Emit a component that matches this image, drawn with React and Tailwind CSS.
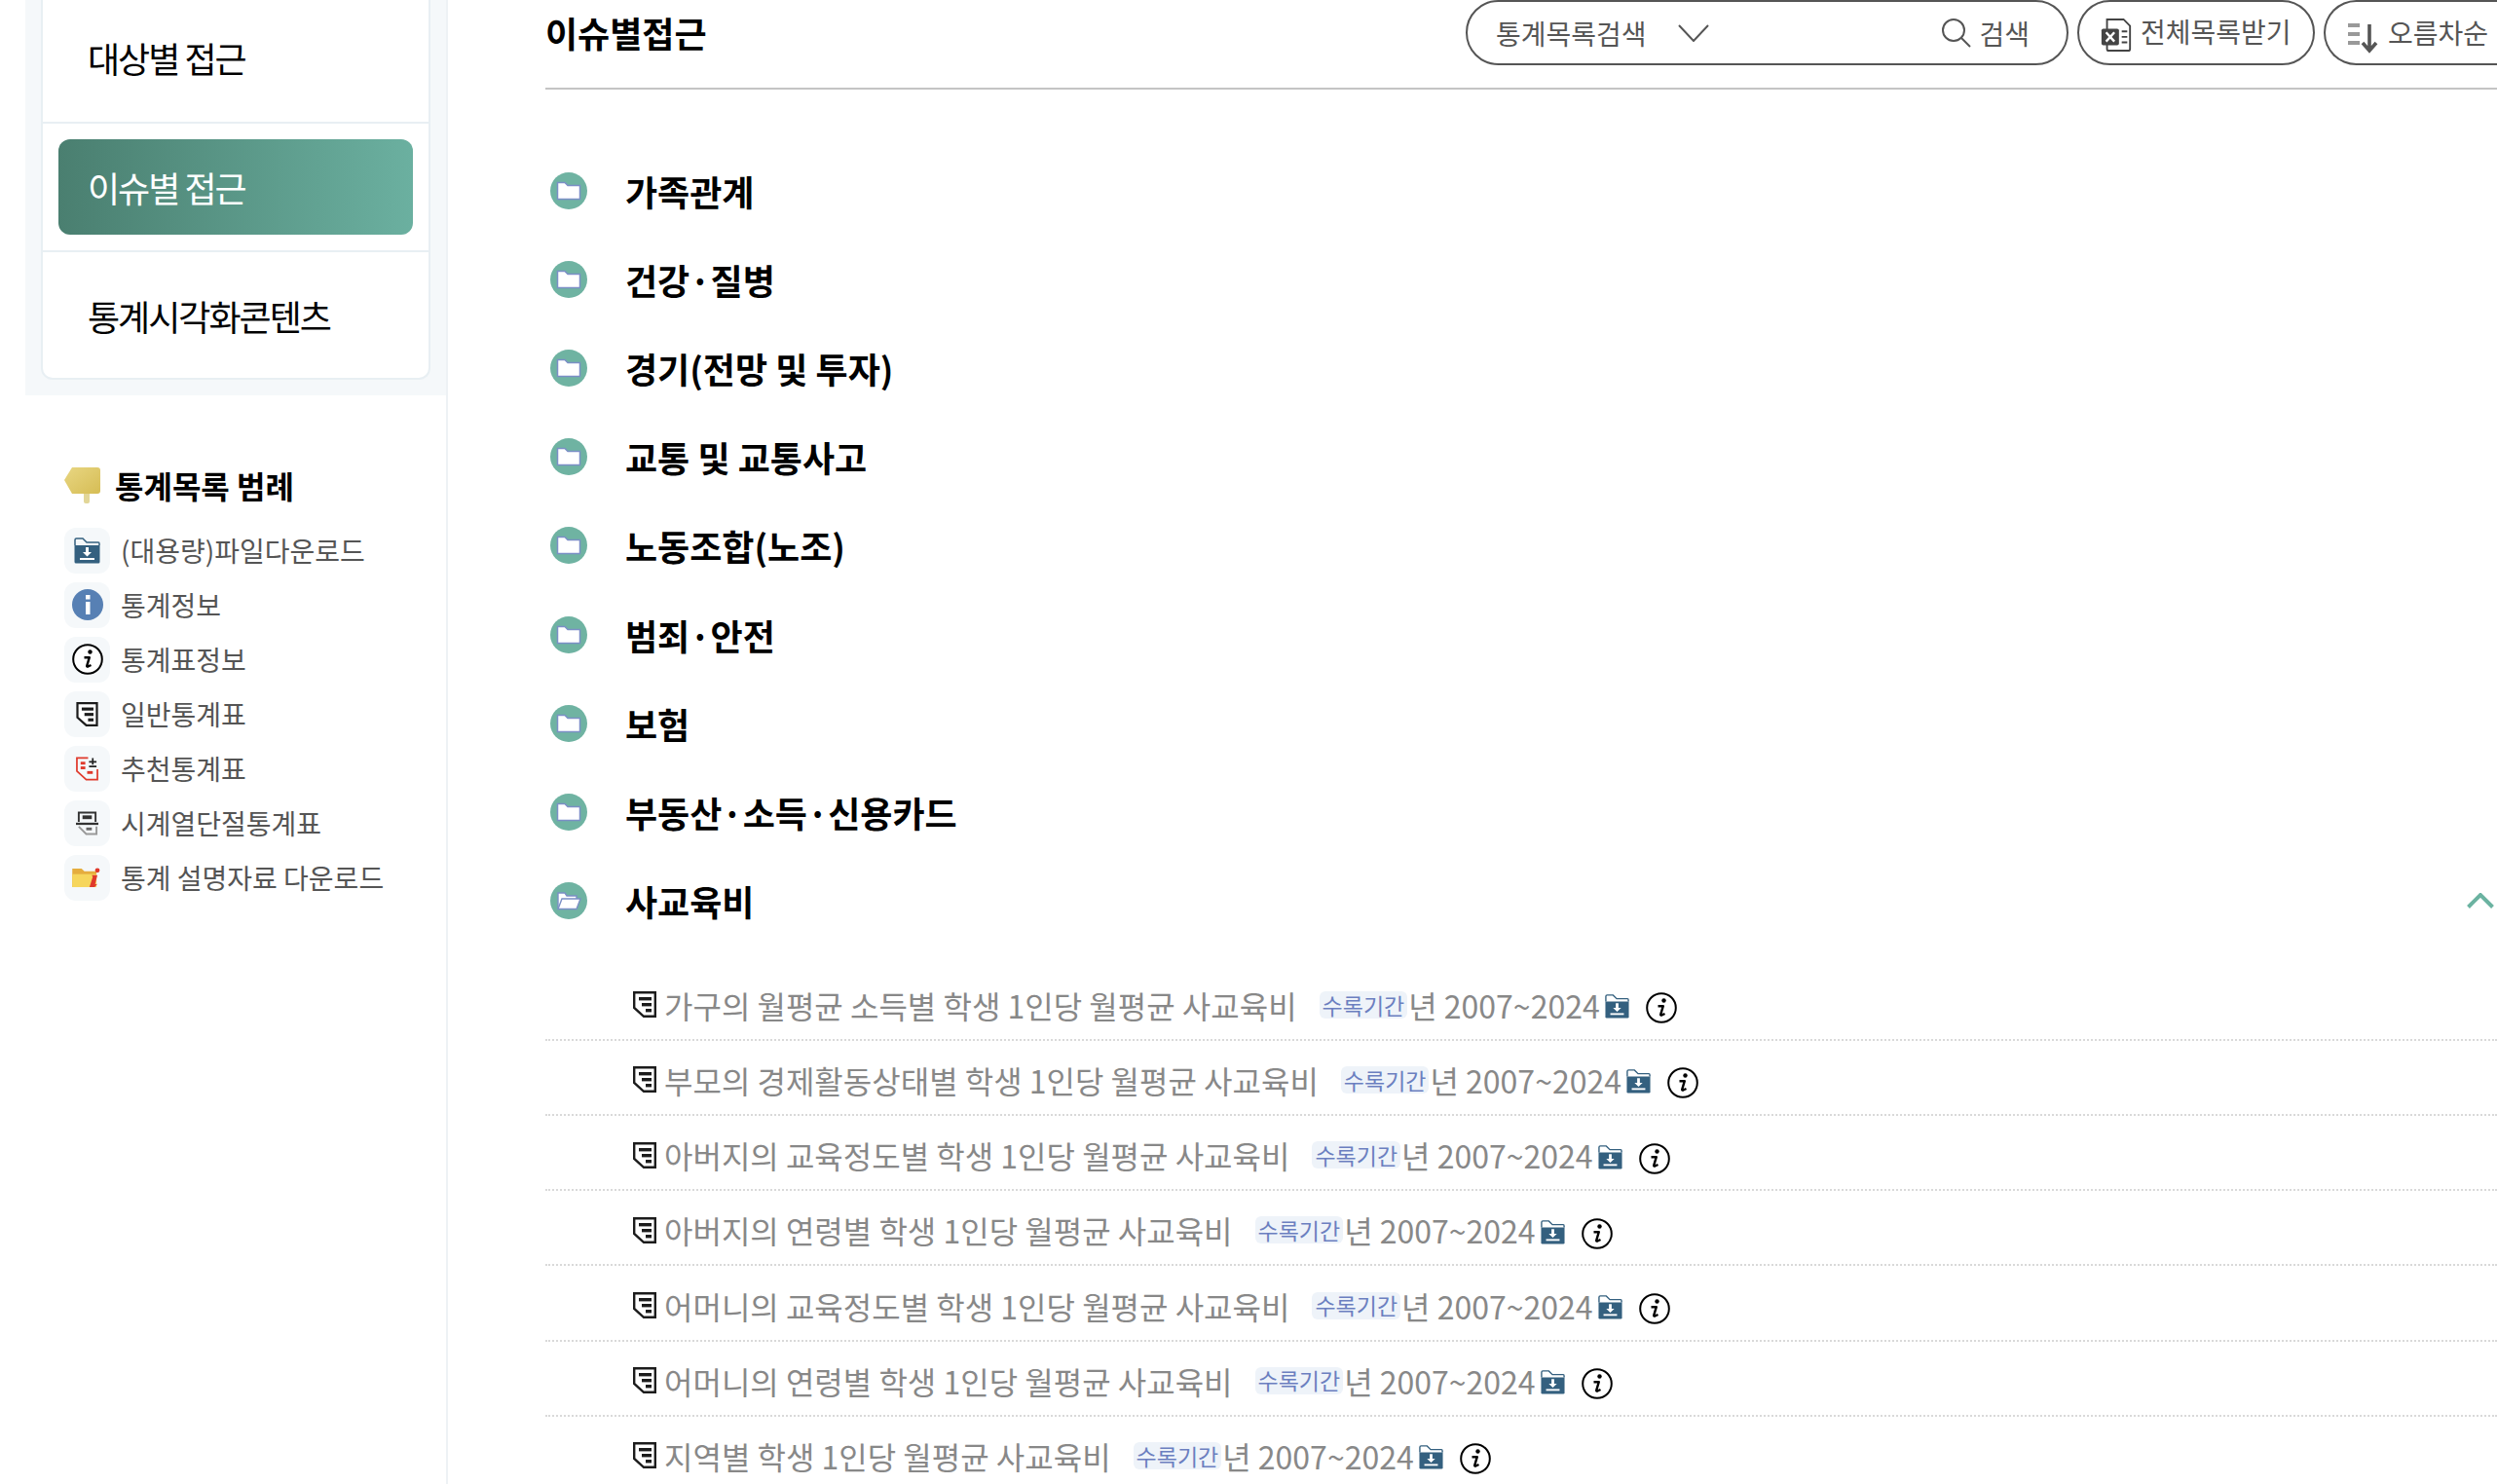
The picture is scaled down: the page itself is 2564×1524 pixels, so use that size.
import React from 'react';

const CATEGORIES = ['가족관계', '건강·질병', '경기(전망 및 투자)', '교통 및 교통사고', '노동조합(노조)', '범죄·안전', '보험', '부동산·소득·신용카드'];

const STATS = [
  '가구의 월평균 소득별 학생 1인당 월평균 사교육비',
  '부모의 경제활동상태별 학생 1인당 월평균 사교육비',
  '아버지의 교육정도별 학생 1인당 월평균 사교육비',
  '아버지의 연령별 학생 1인당 월평균 사교육비',
  '어머니의 교육정도별 학생 1인당 월평균 사교육비',
  '어머니의 연령별 학생 1인당 월평균 사교육비',
  '지역별 학생 1인당 월평균 사교육비',
];

function FolderDown({ className }) {
  return (
    <svg viewBox="0 0 27 27" className={className}>
      <path d="M1 8V2.500Q1 1 2.500 1H9L13 5H25Q26 5 26 6.500V8" fill="none" stroke="#34607f" strokeWidth="1.500" />
      <path d="M0.500 8H26.500V25Q26.500 26.500 25 26.500H2Q0.500 26.500 0.500 25Z" fill="#34607f" />
      <path d="M12 10H15V15H18L13.500 19.500L9 15H12Z" fill="#fff" />
      <rect x="6" y="21" width="15" height="2" fill="#fff" />
    </svg>
  );
}

function InfoItalic({ className }) {
  return (
    <svg viewBox="0 0 32 32" className={className}>
      <circle cx="16" cy="16" r="14.800" fill="#fff" stroke="#000" strokeWidth="2" />
      <circle cx="18.500" cy="8.500" r="2.200" fill="#000" />
      <path d="M12.500 14.200H17.800L15.200 22.800Q15 24 16.400 23.500L19.500 22" fill="none" stroke="#000" strokeWidth="2.400" strokeLinejoin="round" />
    </svg>
  );
}

function DocIcon({ className, color = '#1c1c1c' }) {
  return (
    <svg viewBox="0 0 24 27" className={className}>
      <path d="M1.200 1.200H22.800V25.800H11L1.200 17Z" fill="#fff" stroke={color} strokeWidth="2.400" />
      <rect x="6" y="6" width="13" height="3.400" fill={color} />
      <rect x="9" y="12" width="10" height="3.400" fill={color} />
      <rect x="13" y="18" width="6" height="3.400" fill={color} />
    </svg>
  );
}

function RecommendIcon({ className }) {
  return (
    <svg viewBox="0 0 24 25" className={className}>
      <path d="M13 1H1V15L11 24H23V13" fill="none" stroke="#e0392b" strokeWidth="1.800" />
      <rect x="5" y="5" width="5" height="3" fill="#e0392b" />
      <rect x="5" y="10" width="5" height="3" fill="#e0392b" />
      <rect x="12" y="15" width="6" height="3" fill="#e0392b" />
      <path d="M18 1V8M14 5H22M14 10H22" stroke="#222" strokeWidth="1.800" />
    </svg>
  );
}

function SliceIcon({ className }) {
  return (
    <svg viewBox="0 0 24 25" className={className}>
      <path d="M3 11V1H21V11" fill="none" stroke="#333" strokeWidth="2" />
      <rect x="7" y="4" width="10" height="4" fill="#333" />
      <path d="M0 13H24" stroke="#333" strokeWidth="2.400" />
      <path d="M3 16L11 24H22V16" fill="none" stroke="#999" strokeWidth="2" />
      <rect x="11" y="17" width="6" height="3" fill="#666" />
    </svg>
  );
}

function ExplainIcon({ className }) {
  return (
    <svg viewBox="0 0 32 22" className={className}>
      <path d="M0 1H10L13 4H26V21H0Z" fill="#e5ad3e" />
      <path d="M0 7H26V21H0Z" fill="#f6d65c" />
      <circle cx="27" cy="3" r="2.500" fill="#e0392b" />
      <path d="M21 8H27L24.500 18L27 17.500L24 21H18.500L22 10Z" fill="#e0392b" />
    </svg>
  );
}

function SignIcon() {
  return (
    <svg viewBox="0 0 38 38" className="w-[38px] h-[38px]">
      <defs>
        <linearGradient id="sign" x1="0" y1="0" x2="1" y2="1">
          <stop offset="0" stopColor="#e8d682" />
          <stop offset="1" stopColor="#d6bd55" />
        </linearGradient>
      </defs>
      <rect x="20" y="26" width="6" height="12" rx="2" fill="#e2d698" />
      <path d="M8 1H34Q37 1 37 4V25Q37 28 34 28H8L0 14Z" fill="url(#sign)" />
    </svg>
  );
}

function CircleFolder({ open }) {
  return (
    <span className="w-[38px] h-[38px] rounded-full bg-[#6fb3a2] flex items-center justify-center shrink-0">
      <svg viewBox="0 0 26 20" className="w-[26px] h-[20px]">
        {open ? (
          <>
            <path d="M2 18V2H9L11 5H21V8" fill="#fff" stroke="#7b8fc6" strokeWidth="1.400" />
            <path d="M6 8H25L21 18.500H2Z" fill="#fff" stroke="#7b8fc6" strokeWidth="1.400" />
          </>
        ) : (
          <path d="M1.500 1.500H9L12 4.500H24.500V18.500H1.500Z" fill="#fff" stroke="#7b8fc6" strokeWidth="1.500" />
        )}
      </svg>
    </span>
  );
}

function LegendRow({ label, children }) {
  return (
    <li className="flex items-center gap-[11px] h-[56px]">
      <span className="w-[47px] h-[47px] rounded-xl bg-[#f5f8fa] flex items-center justify-center shrink-0">{children}</span>
      <span className="text-[28px] text-[#555]">{label}</span>
    </li>
  );
}

function CategoryRow({ name, open }) {
  return (
    <div className="flex items-center h-[91.200px] pl-[5px]">
      <CircleFolder open={open} />
      <span className="ml-[39px] text-[36px] font-bold text-black whitespace-nowrap">{name}</span>
      {open && (
        <svg viewBox="0 0 28 16" className="w-[28px] h-[16px] ml-auto mr-[3px]">
          <path d="M1.500 14.500L14 2L26.500 14.500" fill="none" stroke="#6bb3a1" strokeWidth="4" />
        </svg>
      )}
    </div>
  );
}

function StatRow({ title }) {
  return (
    <div className="flex items-center h-[77.200px] pl-[90px] pt-[5px] border-b-2 border-dotted border-[#d9d9d9] whitespace-nowrap">
      <DocIcon className="w-[24px] h-[27px] shrink-0" />
      <span className="ml-[8px] text-[32px] text-[#888]">{title}</span>
      <span className="ml-[23px] px-[3px] h-[28px] rounded-md bg-[#eef3f9] text-[#6b7fc0] text-[23px] flex items-center">수록기간</span>
      <span className="ml-[1px] text-[32px] text-[#888]">년 2007~2024</span>
      <FolderDown className="ml-[5px] w-[25px] h-[25px] mt-[4px] shrink-0" />
      <InfoItalic className="ml-[17px] w-[32px] h-[32px] mt-[7px] shrink-0" />
    </div>
  );
}

export default function App() {
  return (
    <div className="flex w-[2564px] h-[1524px] overflow-hidden bg-white font-['Noto_Sans_CJK_KR','Noto_Sans',sans-serif]">
      <aside className="w-[460px] shrink-0 pl-[26px] border-r-2 border-[#eef2f5]">
        <div className="bg-[#f5f8fa] w-[432px] px-[16px] pb-[16px]">
          <div className="bg-white border-2 border-t-0 border-[#e8eff3] rounded-b-xl text-[36px] tracking-[-2px] text-black">
            <div className="h-[125px] pb-[7px] flex items-center pl-[46px]">대상별 접근</div>
            <div className="h-[134px] border-y-2 border-[#e8eff3] flex items-center px-[16px]">
              <div className="w-full h-[98px] rounded-xl bg-gradient-to-r from-[#4a7f70] to-[#6bb0a0] text-white flex items-center pl-[30px]">이슈별 접근</div>
            </div>
            <div className="h-[129px] flex items-center pl-[46px]">통계시각화콘텐츠</div>
          </div>
        </div>
        <div className="pl-[40px] pt-[70px]">
          <h3 className="flex items-center gap-[14px] h-[44px] text-[32px] font-bold text-black">
            <SignIcon />
            통계목록 범례
          </h3>
          <ul className="mt-[17px]">
            <LegendRow label="(대용량)파일다운로드"><FolderDown className="w-[27px] h-[27px]" /></LegendRow>
            <LegendRow label="통계정보">
              <svg viewBox="0 0 32 32" className="w-[32px] h-[32px]">
                <circle cx="16" cy="16" r="16" fill="#5780b4" />
                <rect x="14" y="6" width="4.500" height="4.500" fill="#fff" />
                <rect x="14" y="13" width="4.500" height="13" fill="#fff" />
              </svg>
            </LegendRow>
            <LegendRow label="통계표정보"><InfoItalic className="w-[32px] h-[32px]" /></LegendRow>
            <LegendRow label="일반통계표"><DocIcon className="w-[23px] h-[25px]" /></LegendRow>
            <LegendRow label="추천통계표"><RecommendIcon className="w-[23px] h-[25px]" /></LegendRow>
            <LegendRow label="시계열단절통계표"><SliceIcon className="w-[23px] h-[25px]" /></LegendRow>
            <LegendRow label="통계 설명자료 다운로드"><ExplainIcon className="w-[31px] h-[21px]" /></LegendRow>
          </ul>
        </div>
      </aside>

      <main className="ml-[100px] w-[2004px] shrink-0">
        <header className="h-[92px] border-b-2 border-[#c4c4c4] flex items-start">
          <h2 className="h-[66px] flex items-center text-[36px] font-bold text-black">이슈별접근</h2>
          <div className="ml-auto flex gap-[9px] -mr-[3px] text-[28px] text-[#555]">
            <div className="w-[619px] h-[67px] border-2 border-[#555] rounded-full flex items-center pl-[29px] pr-[38px]">
              통계목록검색
              <svg viewBox="0 0 32 18" className="w-[32px] h-[18px] ml-[32px]">
                <path d="M1 1L16 17L31 1" fill="none" stroke="#555" strokeWidth="2" />
              </svg>
              <svg viewBox="0 0 32 32" className="w-[32px] h-[32px] ml-auto">
                <circle cx="13" cy="13" r="11" fill="none" stroke="#555" strokeWidth="2" />
                <path d="M21 21L30 30" stroke="#555" strokeWidth="2" />
              </svg>
              <span className="ml-[7px]">검색</span>
            </div>
            <div className="w-[244px] h-[67px] border-2 border-[#555] rounded-full flex items-center pl-[22px] gap-[8px] whitespace-nowrap">
              <svg viewBox="0 0 32 36" className="w-[32px] h-[34px] shrink-0 mt-[4px]">
                <path d="M8 1H24L31 8V33Q31 35 29 35H8Q6 35 6 33V1Z" fill="#fff" stroke="#444" strokeWidth="2" />
                <rect x="0" y="11" width="19" height="18" rx="2" fill="#444" />
                <path d="M5 15L14 25M14 15L5 25" stroke="#fff" strokeWidth="2.500" />
                <path d="M22 14H28M22 20H28M22 26H28" stroke="#444" strokeWidth="2" />
              </svg>
              <span className="-mt-[4px] ml-[1px]">전체목록받기</span>
            </div>
            <div className="w-[181px] h-[67px] border-2 border-r-0 border-[#555] rounded-l-full flex items-center pl-[22px] gap-[10px] whitespace-nowrap">
              <svg viewBox="0 0 32 32" className="w-[32px] h-[32px] shrink-0 mt-[10px]">
                <path d="M1 3H13M1 12H13M1 21H13" stroke="#999" strokeWidth="4" />
                <path d="M23 2V28M16 21L23 29L30 21" fill="none" stroke="#555" strokeWidth="3.600" />
              </svg>
              <span className="-mt-[2px]">오름차순</span>
            </div>
          </div>
        </header>

        <div className="mt-[58px]">
          {CATEGORIES.map((name) => (
            <CategoryRow key={name} name={name} />
          ))}
          <CategoryRow name="사교육비" open />
        </div>

        <div className="mt-[21px]">
          {STATS.map((title) => (
            <StatRow key={title} title={title} />
          ))}
        </div>
      </main>
    </div>
  );
}
